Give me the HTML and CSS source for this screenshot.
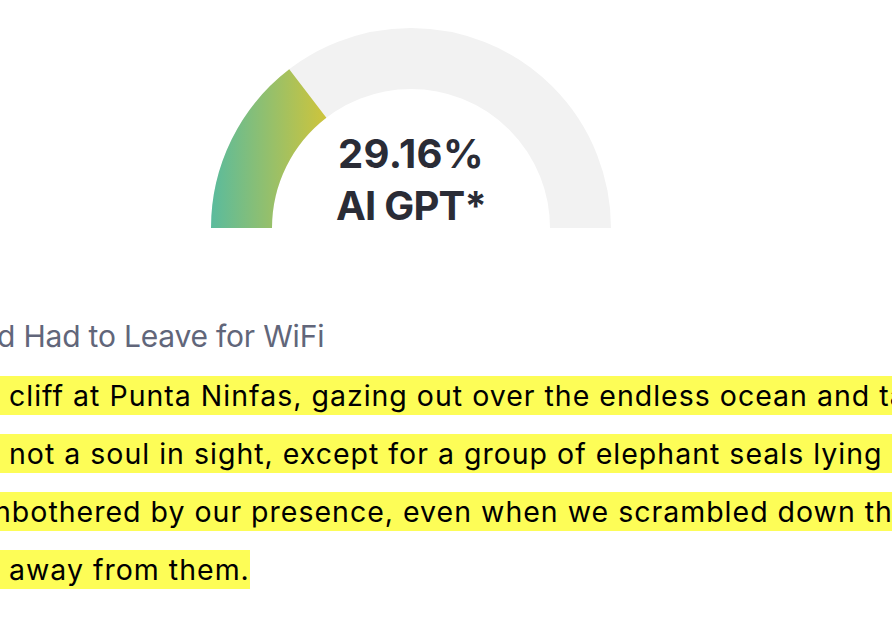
FILE: index.html
```html
<!DOCTYPE html>
<html>
<head>
<meta charset="utf-8">
<link rel="stylesheet" href="styles.css">
</head>
<body>
<div class="page">
  <section class="gauge-wrap">
    <div class="gauge">
      <svg class="gauge-svg" width="400" height="200" viewBox="0 0 400 200">
        <defs>
          <linearGradient id="g" gradientUnits="userSpaceOnUse" x1="0" y1="0" x2="112" y2="0">
            <stop offset="0" stop-color="#5abb9d"/>
            <stop offset="1" stop-color="#cbc43e"/>
          </linearGradient>
        </defs>
        <path d="M30.5 200 A169.5 169.5 0 0 1 369.5 200" fill="none" stroke="#f2f2f2" stroke-width="61"/>
        <path d="M30.5 200 A169.5 169.5 0 0 1 96.8 65.5" fill="none" stroke="url(#g)" stroke-width="61"/>
      </svg>
      <div class="gauge-label">
        <div class="gauge-value">29.16%</div>
        <div class="gauge-name">AI GPT*</div>
      </div>
    </div>
  </section>
  <h2 class="title">d Had to Leave for WiFi</h2>
  <p class="body-text"><span class="hl">&nbsp;cliff at Punta Ninfas, gazing out over the endless ocean and taking</span><br><span class="hl">&nbsp;not a soul in sight, except for a group of elephant seals lying on the</span><br><span class="hl nb">nbothered by our presence, even when we scrambled down the</span><br><span class="hl">&nbsp;away from them.</span></p>
</div>
</body>
</html>
```

FILE: styles.css
```css
html, body {
  margin: 0;
  padding: 0;
  background: #ffffff;
  overflow: hidden;
}
body {
  width: 892px;
  height: 622px;
  font-family: Inter, "Noto Sans", sans-serif;
}
.page {
  padding-top: 28px;
  overflow: hidden;
}
.gauge-wrap {
  display: flex;
  justify-content: center;
  padding-right: 70px;
}
.gauge {
  position: relative;
  width: 400px;
  height: 200px;
}
.gauge-svg {
  display: block;
}
.gauge-label {
  position: absolute;
  left: 0;
  right: 0;
  top: 100px;
  text-align: center;
  font-weight: 700;
  font-size: 40px;
  line-height: 52px;
  color: #2a2c36;
}
.gauge-value {
  letter-spacing: 0.4px;
}
.gauge-name {
  letter-spacing: -0.8px;
}
.title {
  margin: 88px 0 0 -3px;
  font-size: 30px;
  font-weight: 400;
  line-height: 40px;
  color: #61667a;
  white-space: nowrap;
  letter-spacing: -0.2px;
}
.body-text {
  margin: 11px 0 0 0;
  font-size: 28.5px;
  line-height: 58px;
  letter-spacing: 1px;
  color: #000000;
  white-space: nowrap;
}
.hl {
  background: #fdfd57;
  padding: 2px 0;
}
.nb {
  margin-left: -6px;
}
```
